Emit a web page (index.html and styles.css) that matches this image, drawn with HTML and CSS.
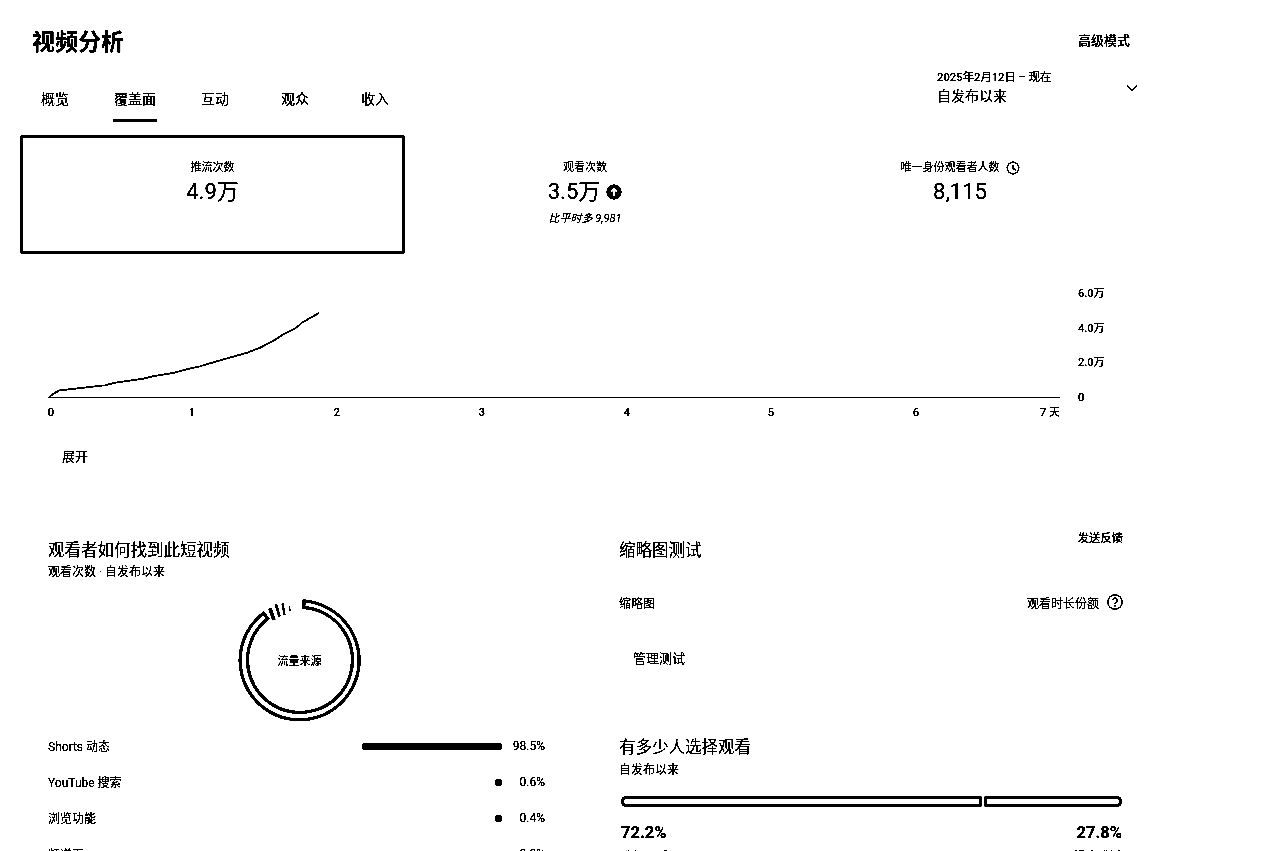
FILE: index.html
```html
<!DOCTYPE html>
<html lang="zh-CN">
<head>
    <meta charset="UTF-8">
    <meta name="viewport" content="width=device-width, initial-scale=1.0">
    <title>视频分析</title>
    <link rel="stylesheet" href="styles.css">
</head>
<body>
    <div class="page">
        <header class="top">
            <h1>视频分析</h1>
            <a class="mode-link">高级模式</a>
        </header>

        <div class="nav-row">
            <nav class="tabs">
                <a class="tab">概览</a>
                <a class="tab active">覆盖面</a>
                <a class="tab">互动</a>
                <a class="tab">观众</a>
                <a class="tab">收入</a>
            </nav>
            <div class="date-picker">
                <div class="date-text">
                    <div class="date-range">2025年2月12日 – 现在</div>
                    <div class="date-label">自发布以来</div>
                </div>
                <svg class="chevron" width="14" height="14" viewBox="0 0 14 14"><path d="M2 4.5l5 5 5-5" fill="none" stroke="#000" stroke-width="1.6"/></svg>
            </div>
        </div>

        <section class="metrics">
            <div class="metric selected">
                <div class="metric-label">推流次数</div>
                <div class="metric-value">4.9万</div>
            </div>
            <div class="metric">
                <div class="metric-label">观看次数</div>
                <div class="metric-value">3.5万
                    <svg class="up-icon" width="16" height="16" viewBox="0 0 16 16"><circle cx="8" cy="8" r="7.5"/><path d="M8 12.5V5M4.8 8L8 4.5 11.2 8" fill="none" stroke="#fff" stroke-width="2"/></svg>
                </div>
                <div class="metric-note">比平时多 9,981</div>
            </div>
            <div class="metric">
                <div class="metric-label">唯一身份观看者人数
                    <svg class="clock-icon" width="14" height="14" viewBox="0 0 14 14"><circle cx="7" cy="7" r="5.8" fill="none" stroke="#000" stroke-width="1.2"/><path d="M7 3.5V7.3L9.6 9.2" fill="none" stroke="#000" stroke-width="1.2"/></svg>
                </div>
                <div class="metric-value">8,115</div>
            </div>
        </section>

        <div class="chart">
            <svg width="1130" height="150" viewBox="0 0 1130 150">
                <g transform="translate(0 -280)">
                    <line x1="48" y1="397.5" x2="1060" y2="397.5" stroke="#000" stroke-width="1.2"/>
                    <polyline fill="none" stroke="#000" stroke-width="1.5" points="48,398 54,393.5 59,390.6 83,387.7 105,385.2 115,382.8 143,378.7 153,376.2 173,373 187,369.2 200,366.3 223,359.5 247,352.7 260,347.7 273,341 283,334.5 295,328.7 302,322.7 319,313"/>
                    <g class="axis-text">
                        <text x="51" y="416" text-anchor="middle">0</text>
                        <text x="192" y="416" text-anchor="middle">1</text>
                        <text x="337" y="416" text-anchor="middle">2</text>
                        <text x="482" y="416" text-anchor="middle">3</text>
                        <text x="627" y="416" text-anchor="middle">4</text>
                        <text x="771" y="416" text-anchor="middle">5</text>
                        <text x="916" y="416" text-anchor="middle">6</text>
                        <text x="1060" y="416" text-anchor="end">7 天</text>
                        <text x="1078" y="297">6.0万</text>
                        <text x="1078" y="332">4.0万</text>
                        <text x="1078" y="366">2.0万</text>
                        <text x="1078" y="401">0</text>
                    </g>
                </g>
            </svg>
        </div>

        <a class="expand">展开</a>

        <div class="columns">
            <section class="col-left">
                <h2>观看者如何找到此短视频</h2>
                <div class="sub sub-left">观看次数 · 自发布以来</div>
                <div class="donut">
                    <svg width="130" height="130" viewBox="234.5 595 130 130">
                        <path d="M303.6 601A59.5 59.5 0 1 1 262.9 613.1L267.2 618.6A52.5 52.5 0 1 0 303.2 607.6Z" fill="#fff" stroke="#000" stroke-width="3"/>
                        <path d="M269.5 608.3L273.5 620" stroke="#000" stroke-width="3.5"/>
                        <path d="M275.5 604.5L279 616.5" stroke="#000" stroke-width="2.5"/>
                        <path d="M282 603.5L284 615" stroke="#000" stroke-width="2"/>
                        <path d="M289 606L289.6 611" stroke="#000" stroke-width="1"/>
                    </svg>
                    <span class="donut-label">流量来源</span>
                </div>
                <div class="source-row">
                    <span class="source-name">Shorts 动态</span>
                    <span class="source-bar wide"></span>
                    <span class="source-val">98.5%</span>
                </div>
                <div class="source-row">
                    <span class="source-name">YouTube 搜索</span>
                    <span class="source-bar"></span>
                    <span class="source-val">0.6%</span>
                </div>
                <div class="source-row">
                    <span class="source-name">浏览功能</span>
                    <span class="source-bar"></span>
                    <span class="source-val">0.4%</span>
                </div>
                <div class="source-row">
                    <span class="source-name">频道页</span>
                    <span class="source-bar"></span>
                    <span class="source-val">0.2%</span>
                </div>
            </section>

            <section class="col-right">
                <a class="feedback">发送反馈</a>
                <h2>缩略图测试</h2>
                <div class="thumb-head">
                    <span>缩略图</span>
                    <span class="thumb-share">观看时长份额
                        <svg width="16" height="16" viewBox="0 0 16 16"><circle cx="8" cy="8" r="7.2" fill="none" stroke="#000" stroke-width="1.2"/><path d="M5.8 6.2a2.2 2.2 0 1 1 3.4 1.9C8.4 8.6 8 9 8 10" fill="none" stroke="#000" stroke-width="1.3"/><rect x="7.3" y="11" width="1.4" height="1.5"/></svg>
                    </span>
                </div>
                <a class="manage">管理测试</a>

                <h2 class="choose-title">有多少人选择观看</h2>
                <div class="sub">自发布以来</div>
                <div class="split-bar">
                    <span class="seg seg-a"></span>
                    <span class="seg seg-b"></span>
                </div>
                <div class="split-nums">
                    <div>
                        <div class="split-val">72.2%</div>
                        <div class="split-label">选择观看</div>
                    </div>
                    <div class="right">
                        <div class="split-val">27.8%</div>
                        <div class="split-label">滑走跳过</div>
                    </div>
                </div>
            </section>
        </div>
    </div>
</body>
</html>
```
FILE: styles.css
```css
/* General Styles */
html, body {
    margin: 0;
    padding: 0;
    height: 851px;
    overflow: hidden;
    background: #fff;
}

body {
    font-family: 'Roboto', 'Noto Sans CJK SC', sans-serif;
    color: #000;
    /* the reference is a hard black and white capture */
    filter: grayscale(1) brightness(0.75) contrast(2000%);
}

.page {
    width: 1280px;
}

h1, h2 {
    margin: 0;
}

.top {
    display: flex;
    justify-content: space-between;
    padding: 26px 150px 0 32px;
    height: 42px;
}

h1 {
    font-size: 23px;
    line-height: 34px;
    font-weight: 700;
}

.mode-link {
    font-size: 13px;
    line-height: 30px;
    font-weight: 500;
}

.nav-row {
    display: flex;
    justify-content: space-between;
    height: 67px;
}

.tabs {
    display: flex;
    padding-left: 15px;
}

.tab {
    width: 80px;
    display: block;
    text-align: center;
    font-size: 14px;
    line-height: 20px;
    padding-top: 21px;
    position: relative;
}

.tab.active::after {
    content: "";
    position: absolute;
    left: 18px;
    right: 18px;
    top: 51px;
    height: 3px;
    background: #000;
    border-radius: 2px;
}

.date-picker {
    display: flex;
    width: 202px;
    margin-right: 141px;
    justify-content: space-between;
}

.date-range {
    font-size: 11.3px;
    line-height: 16px;
    font-weight: 500;
    margin-top: 2px;
}

.date-label {
    font-size: 14px;
    line-height: 20px;
}

.chevron {
    margin-top: 13px;
}

/* Metric cards */
.metrics {
    display: grid;
    grid-template-columns: 385px 360px 390px;
    margin-left: 20px;
    height: 119px;
}

.metric {
    text-align: center;
    padding-top: 25px;
    box-sizing: border-box;
}

.metric.selected {
    border: 3px solid #000;
    border-radius: 3px;
    padding-top: 22px;
}

.metric-label {
    font-size: 11px;
    line-height: 16px;
    display: flex;
    justify-content: center;
    align-items: center;
    gap: 6px;
}

.metric-value {
    font-size: 22px;
    line-height: 30px;
    margin-top: 1px;
    display: flex;
    justify-content: center;
    align-items: center;
    gap: 6px;
}

.metric-note {
    font-size: 11px;
    line-height: 16px;
    font-style: italic;
    margin-top: 4px;
}

/* Chart */
.chart {
    height: 150px;
    margin-top: 26px;
}

.chart svg {
    display: block;
}

.axis-text {
    font-size: 11px;
    font-weight: 500;
}

.expand {
    display: block;
    margin: 17px 0 0 62px;
    font-size: 13px;
    line-height: 20px;
}

/* Lower sections */
.columns {
    display: grid;
    grid-template-columns: 497px 503px;
    column-gap: 74px;
    margin: 73px 0 0 48px;
}

h2 {
    font-size: 16.5px;
    line-height: 22px;
    font-weight: 400;
}

.sub {
    font-size: 12px;
    line-height: 16px;
    margin-top: 3px;
}

.sub-left {
    margin-top: 2px;
}

.donut {
    position: relative;
    width: 130px;
    height: 130px;
    margin: 15px auto 0;
    left: 3px;
}

.donut svg {
    display: block;
}

.donut-label {
    position: absolute;
    left: 0;
    right: 0;
    top: 59px;
    text-align: center;
    font-size: 11px;
    line-height: 16px;
}

.source-row {
    display: flex;
    align-items: center;
    height: 36px;
    font-size: 12px;
}

.donut + .source-row {
    margin-top: 2px;
}

.source-name {
    flex: 1;
}

.source-bar {
    width: 7px;
    height: 7px;
    border-radius: 4px;
    background: #000;
    margin-top: 2px;
}

.source-bar.wide {
    width: 140px;
}

.source-val {
    width: 43px;
    text-align: right;
    padding-top: 2px;
}

.col-right {
    position: relative;
}

.feedback {
    position: absolute;
    right: -1px;
    top: -9px;
    font-size: 11.3px;
    line-height: 16px;
    font-weight: 500;
}

.thumb-head {
    display: flex;
    justify-content: space-between;
    align-items: center;
    margin-top: 30px;
    height: 20px;
    font-size: 12px;
}

.thumb-share {
    display: flex;
    align-items: center;
    gap: 8px;
    margin-right: -1px;
}

.manage {
    display: block;
    margin: 37px 0 0 14px;
    font-size: 13px;
    line-height: 20px;
}

.choose-title {
    margin-top: 68px;
}

.split-bar {
    display: flex;
    gap: 2px;
    margin: 18px 0 0 2px;
    height: 11px;
}

.seg {
    display: block;
    height: 100%;
    box-sizing: border-box;
    border: 3px solid #000;
    background: #fff;
}

.seg-a {
    width: 361px;
    border-radius: 5px 2px 2px 5px;
}

.seg-b {
    width: 138px;
    border-radius: 2px 5px 5px 2px;
}

.split-nums {
    display: flex;
    justify-content: space-between;
    margin: 15px 0 0 2px;
}

.split-nums .right {
    text-align: right;
}

.split-val {
    font-size: 16.5px;
    line-height: 22px;
    font-weight: 700;
}

.split-label {
    font-size: 12px;
    line-height: 16px;
    margin-top: 5px;
}
```
